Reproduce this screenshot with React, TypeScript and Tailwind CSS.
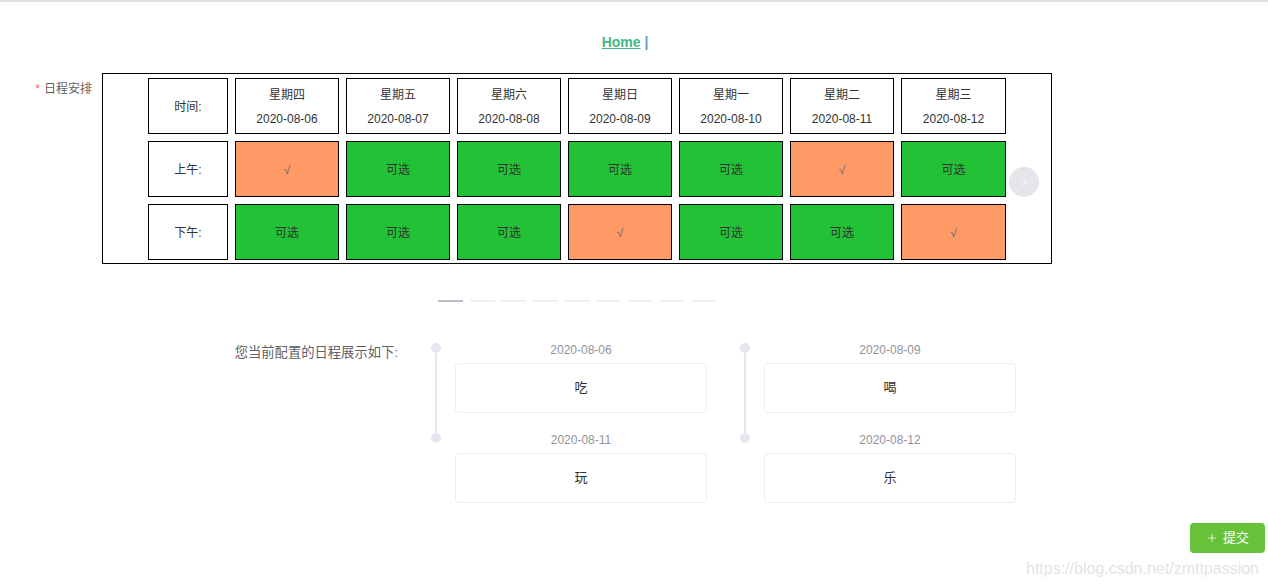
import { ChevronRight, Plus } from 'lucide-react';

const days = [
  { week: '星期四', date: '2020-08-06' },
  { week: '星期五', date: '2020-08-07' },
  { week: '星期六', date: '2020-08-08' },
  { week: '星期日', date: '2020-08-09' },
  { week: '星期一', date: '2020-08-10' },
  { week: '星期二', date: '2020-08-11' },
  { week: '星期三', date: '2020-08-12' },
];

// true = picked (√), false = 可选
const am = [true, false, false, false, false, true, false];
const pm = [false, false, false, true, false, false, true];

const columns = [
  [
    { date: '2020-08-06', text: '吃' },
    { date: '2020-08-11', text: '玩' },
  ],
  [
    { date: '2020-08-09', text: '喝' },
    { date: '2020-08-12', text: '乐' },
  ],
];

function SlotCell({ picked }: { picked: boolean }) {
  return (
    <div
      className={
        picked
          ? 'border border-black bg-[#ff9966] flex items-center justify-center pt-[2px] text-[#666a70]'
          : 'border border-black bg-[#21c236] flex items-center justify-center pt-[2px] text-[#333]'
      }
    >
      {picked ? '√' : '可选'}
    </div>
  );
}

export default function App() {
  return (
    <div className="min-h-screen bg-white font-['Liberation_Sans','Noto_Sans_CJK_SC',sans-serif]">
      {/* top rule */}
      <div className="h-[2px] bg-[#dcdfe6]" />

      {/* nav */}
      <div className="pt-[31px] pr-[18px] text-center text-[14px] leading-[18px] font-bold">
        <a className="text-[#42b983] underline">Home</a>
        <span className="text-[#5ea6c6]"> |</span>
      </div>

      {/* schedule form item */}
      <div className="mt-[22px] flex">
        <div className="w-[92px] text-right text-[12px] leading-[32px] text-[#606266]">
          <span className="text-[#f56c6c] mr-[4px]">*</span>日程安排
        </div>
        <div className="ml-[10px] w-[950px]">
          <div className="relative border border-black pl-[45px] pt-[4px] pb-[3px]">
            <div className="grid grid-cols-[80px_repeat(6,104px)_105px] grid-rows-[56px_56px_56px] gap-[7px] text-[12px] text-[#333]">
              <div className="border border-black flex items-center justify-center pt-[2px]">时间:</div>
              {days.map((d) => (
                <div key={d.date} className="border border-black flex flex-col items-center pt-[8px]">
                  <div className="leading-[16px]">{d.week}</div>
                  <div className="leading-[16px] mt-[8px]">{d.date}</div>
                </div>
              ))}

              <div className="border border-black flex items-center justify-center pt-[2px]">上午:</div>
              {am.map((p, i) => (
                <SlotCell key={'am' + i} picked={p} />
              ))}

              <div className="border border-black flex items-center justify-center pt-[2px]">下午:</div>
              {pm.map((p, i) => (
                <SlotCell key={'pm' + i} picked={p} />
              ))}
            </div>

            {/* carousel arrow */}
            <div className="absolute top-[93px] right-[12px] w-[30px] h-[30px] rounded-full bg-[#e4e6ea] flex items-center justify-center">
              <ChevronRight size={14} strokeWidth={1.5} className="text-white" />
            </div>
          </div>

          {/* indicators */}
          <div className="mt-[36px] flex justify-center gap-[6.6px]">
            {Array.from({ length: 9 }).map((_, i) => (
              <div key={i} className={i === 0 ? 'w-[25px] h-[2px] bg-[#b8bcc8]' : 'w-[25px] h-[2px] bg-[#f1f1f3]'} />
            ))}
          </div>
        </div>
      </div>

      {/* configured schedule */}
      <div className="mt-[41px] flex">
        <div className="w-[398px] text-right text-[13.3px] leading-[20px] text-[#606266]">
          您当前配置的日程展示如下:
        </div>
        <div className="ml-[33px] flex">
          {columns.map((col, ci) => (
            <div key={ci} className="w-[309px]">
              {col.map((item, ii) => (
                <div key={item.date} className="flex">
                  <div className="w-[10px] flex flex-col items-center">
                    <div className="w-[10px] h-[10px] rounded-full bg-[#e4e7ed]" />
                    {ii < col.length - 1 && <div className="w-[2px] flex-1 bg-[#e4e7ed]" />}
                  </div>
                  <div className={ii < col.length - 1 ? 'ml-[14px] w-[252px] pb-[20px]' : 'ml-[14px] w-[252px]'}>
                    <div className="text-center text-[12px] leading-[14px] text-[#909399]">{item.date}</div>
                    <div className="mt-[6px] h-[50px] border border-[#ebeef5] rounded-[4px] flex items-center justify-center text-[13px] text-[#303133]">
                      {item.text}
                    </div>
                  </div>
                </div>
              ))}
            </div>
          ))}
        </div>
      </div>

      {/* submit */}
      <div className="mt-[20px] flex justify-end pr-[3px]">
        <button className="w-[75px] h-[30px] rounded-[4px] bg-[#67c23a] text-white text-[13px] flex items-center justify-center gap-[5px]">
          <Plus size={12} strokeWidth={1.5} />
          提交
        </button>
      </div>
      <div className="mt-[7px] pr-[9px] text-right text-[16px] leading-[18px] text-[#e4e4e4]">
        https://blog.csdn.net/zmttpassion
      </div>
    </div>
  );
}
